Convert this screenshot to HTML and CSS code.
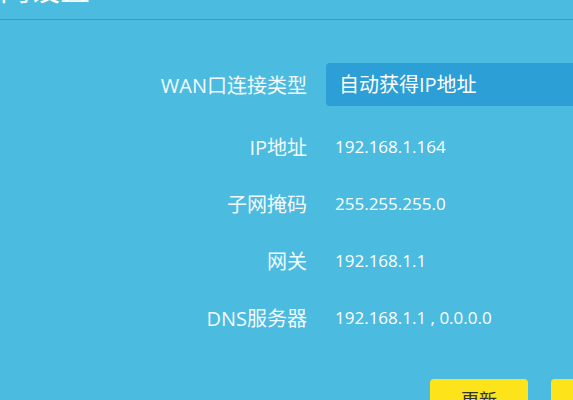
FILE: index.html
```html
<!DOCTYPE html>
<html lang="zh-CN">
<head>
<meta charset="utf-8">
<link rel="stylesheet" href="styles.css">
</head>
<body>
<div class="header">
  <div class="title">上网设置</div>
</div>
<div class="form">
  <div class="row first">
    <div class="label">WAN口连接类型</div>
    <div class="select">自动获得IP地址</div>
  </div>
  <div class="row">
    <div class="label">IP地址</div>
    <div class="value">192.168.1.164</div>
  </div>
  <div class="row">
    <div class="label">子网掩码</div>
    <div class="value">255.255.255.0</div>
  </div>
  <div class="row">
    <div class="label">网关</div>
    <div class="value">192.168.1.1</div>
  </div>
  <div class="row">
    <div class="label">DNS服务器</div>
    <div class="value">192.168.1.1 , 0.0.0.0</div>
  </div>
</div>
<div class="buttons">
  <div class="btn">更新</div>
  <div class="btn">释放</div>
</div>
</body>
</html>
```
FILE: styles.css
```css
html, body {
  margin: 0;
  padding: 0;
  height: 100%;
  overflow: hidden;
}
body {
  background: #4bbbe0;
  color: #ffffff;
  font-family: "Open Sans", "Noto Sans CJK SC", sans-serif;
}
.header {
  height: 19px;
  border-bottom: 1px solid #2f9fd3;
  overflow: hidden;
}
.title {
  font-size: 30px;
  line-height: 30px;
  margin-top: -28px;
  margin-left: -30px;
  font-family: "Noto Sans CJK SC", sans-serif;
}
.form {
  display: flex;
  flex-direction: column;
  margin-top: 36px;
}
.row {
  display: flex;
  align-items: center;
  height: 57px;
}
.row.first {
  margin-bottom: 5px;
}
.label {
  width: 307px;
  flex: none;
  text-align: right;
  font-size: 20px;
  color: #f2fafd;
}
.select {
  margin-left: 19px;
  flex: 1;
  height: 43px;
  line-height: 43px;
  background: #2c9fd6;
  border-radius: 4px 0 0 4px;
  padding-left: 13px;
  font-size: 20px;
}
.value {
  margin-left: 28px;
  font-size: 17px;
}
.buttons {
  display: flex;
  gap: 23px;
  margin-top: 33px;
  padding-left: 430px;
}
.btn {
  flex: none;
  width: 98px;
  height: 34px;
  line-height: 40px;
  background: #fde31a;
  border-radius: 4px;
  color: #333333;
  text-align: center;
  font-size: 18px;
  font-family: "Noto Sans CJK SC", sans-serif;
}
```
